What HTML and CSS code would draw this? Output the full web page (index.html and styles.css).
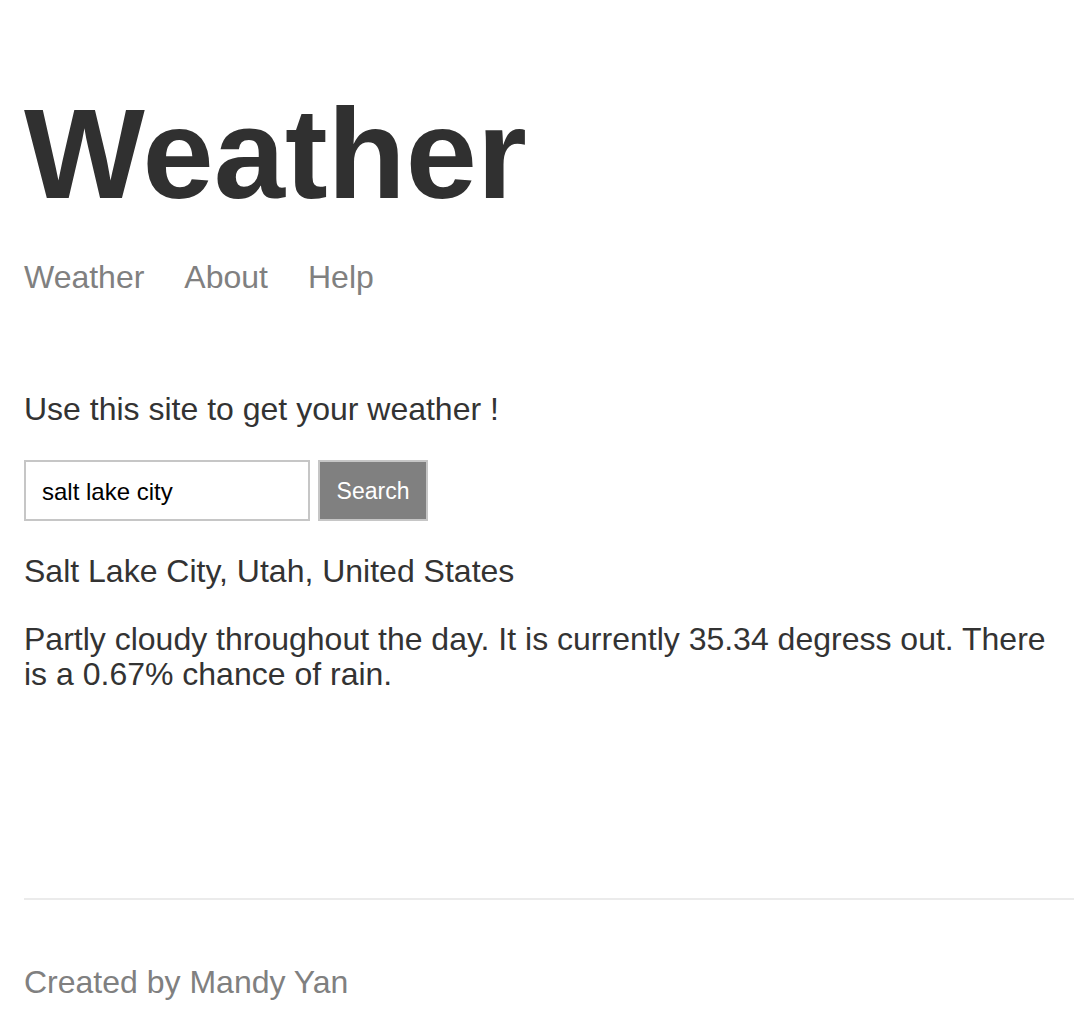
FILE: index.html
```html
<!DOCTYPE html>
<html lang="en">
<head>
<meta charset="utf-8">
<title>Weather</title>
<link rel="stylesheet" href="styles.css">
</head>
<body>
<div class="page">
  <header class="header">
    <h1 class="title">Weather</h1>
    <nav class="nav">
      <a class="nav-link" href="#">Weather</a>
      <a class="nav-link" href="#">About</a>
      <a class="nav-link" href="#">Help</a>
    </nav>
  </header>
  <main class="main">
    <p class="intro">Use this site to get your weather !</p>
    <form class="search-form">
      <input class="search-input" type="text" value="salt lake city">
      <button class="search-button" type="button">Search</button>
    </form>
    <p class="location">Salt Lake City, Utah, United States</p>
    <p class="forecast">Partly cloudy throughout the day. It is currently 35.34 degress out. There is a 0.67% chance of rain.</p>
  </main>
  <footer class="footer">
    <p class="credit">Created by Mandy Yan</p>
  </footer>
</div>
</body>
</html>
```
FILE: styles.css
```css
html, body {
  margin: 0;
  padding: 0;
  background: #ffffff;
}

body {
  font-family: "Liberation Sans", Arial, Helvetica, sans-serif;
  color: #333333;
}

.page {
  padding: 0 10px 0 24px;
}

.title {
  margin: 90px 0 0;
  font-size: 128px;
  line-height: 128px;
  font-weight: 700;
  color: #303030;
}

.nav {
  display: flex;
  gap: 40px;
  margin-top: 43px;
}

.nav-link {
  font-size: 32px;
  line-height: 32px;
  color: #808080;
  text-decoration: none;
}

.main {
  padding-top: 100px;
}

.intro {
  margin: 0;
  font-size: 32px;
  line-height: 32px;
}

.search-form {
  display: flex;
  gap: 8px;
  margin-top: 35px;
}

.search-input {
  box-sizing: border-box;
  width: 286px;
  height: 61px;
  margin: 0;
  padding: 2px 16px 0;
  border: 2px solid #c6c6c6;
  border-radius: 0;
  font-family: "Liberation Sans", Arial, sans-serif;
  font-size: 24px;
  color: #000000;
  outline: none;
}

.search-button {
  box-sizing: border-box;
  width: 110px;
  height: 61px;
  margin: 0;
  padding: 2px 0 0;
  border: 2px solid #c6c6c6;
  border-radius: 0;
  background: #808080;
  color: #ffffff;
  font-family: "Liberation Sans", Arial, sans-serif;
  font-size: 23px;
}

.location {
  margin: 34px 0 0;
  font-size: 32px;
  line-height: 32px;
}

.forecast {
  margin: 35px 0 0;
  font-size: 32px;
  line-height: 35px;
}

.footer {
  margin-top: 206px;
  border-top: 2px solid #ebebeb;
  padding-top: 66px;
  padding-bottom: 20px;
}

.credit {
  margin: 0;
  font-size: 32px;
  line-height: 32px;
  color: #808080;
}
```
